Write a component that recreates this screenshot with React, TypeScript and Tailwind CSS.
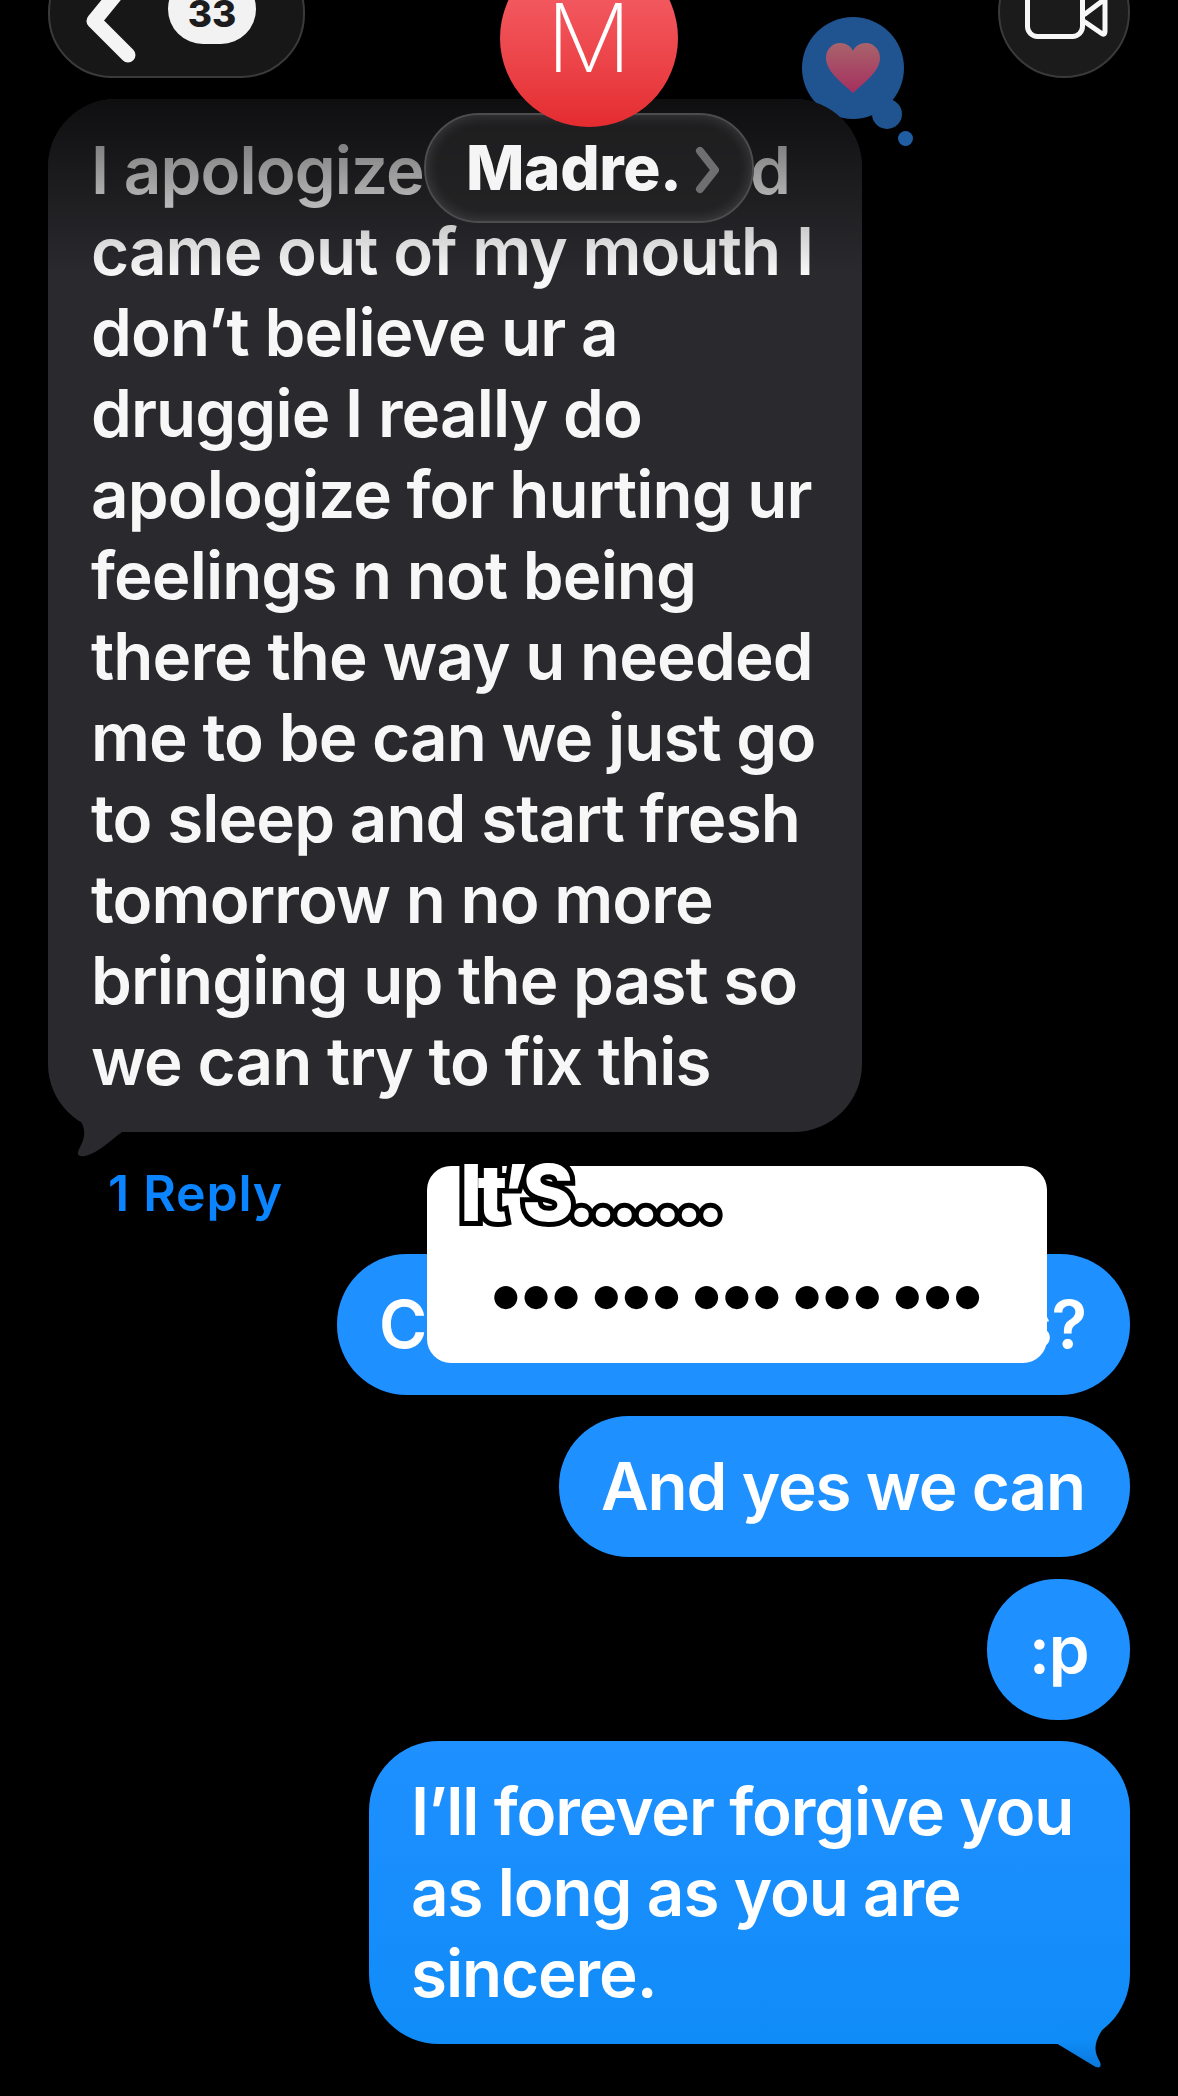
const grayLines = [
  "came out of my mouth I",
  "don’t believe ur a",
  "druggie I really do",
  "apologize for hurting ur",
  "feelings n not being",
  "there the way u needed",
  "me to be can we just go",
  "to sleep and start fresh",
  "tomorrow n no more",
  "bringing up the past so",
  "we can try to fix this",
];

const blueLines = ["I’ll forever forgive you", "as long as you are", "sincere."];

function Header() {
  return (
    <div className="relative flex h-[99px] items-end justify-between px-12 pb-[21px]">
      <div className="relative h-[130px] w-[257px] shrink-0 rounded-[64px] border-2 border-[#3a3a3a] bg-[#171717]">
        <svg className="absolute bottom-0 left-[28px] h-[90px] w-[60px]" viewBox="0 0 60 90" fill="none">
          <path d="M47 -3 L16 35 L50 69" stroke="#f4f4f4" strokeWidth="15" strokeLinecap="round" strokeLinejoin="round" />
        </svg>
        <div className="absolute bottom-[32px] left-[118px] flex h-[70px] w-[88px] items-end justify-center rounded-[40px] bg-[#f2f2f2] pb-[16px] text-[37px] leading-[28px] font-extrabold text-[#1c1c1e]">
          33
        </div>
      </div>
      <div className="relative h-[132px] w-[132px] shrink-0 rounded-full border-2 border-[#3a3a3a] bg-[#1b1b1b]">
        <svg className="absolute top-[52px] left-[25px] h-[50px] w-[90px]" viewBox="0 0 90 50" fill="none">
          <rect x="2.5" y="-20" width="55" height="56.5" rx="10" stroke="#f7f7f7" strokeWidth="5" />
          <path d="M60 22 L76 33 Q80 36 80 31 L80 0 M80 -1 L60 14" stroke="#f7f7f7" strokeWidth="5" strokeLinejoin="round" strokeLinecap="round" />
        </svg>
      </div>
    </div>
  );
}

function ThoughtBubble() {
  return (
    <>
      <div className="absolute top-[17px] left-[802px] flex h-[102px] w-[102px] items-center justify-center rounded-full bg-[#1f5490]">
        <svg className="h-[50px] w-[56px]" viewBox="0 0 56 50">
          <defs>
            <linearGradient id="heart" x1="0" y1="0" x2="0" y2="1">
              <stop offset="0" stopColor="#a9636c" />
              <stop offset="1" stopColor="#a52f5e" />
            </linearGradient>
          </defs>
          <path d="M28 50 C16 39 1 28 1 15 C1 6 8 0 15 0 C21 0 26 3 28 8 C30 3 35 0 41 0 C48 0 55 6 55 15 C55 28 40 39 28 50 Z" fill="url(#heart)" />
        </svg>
      </div>
      <div className="absolute top-[99px] left-[872px] h-[30px] w-[30px] rounded-full bg-[#1f5490]" />
      <div className="absolute top-[131px] left-[898px] h-[15px] w-[15px] rounded-full bg-[#1f5ea3]" />
    </>
  );
}

function GrayBubble() {
  return (
    <div className="relative z-10 ml-12 w-[814px]">
      <div className="relative rounded-[68px] bg-[#2a2a2e] px-[43px] pt-[31px] pb-[30px] text-[65.5px] leading-[81px] font-semibold tracking-[-0.9px] whitespace-nowrap text-[#f7f7f7]">
        <div className="flex w-[699px] justify-between">
          <span>I apologize</span>
          <span>d</span>
        </div>
        {grayLines.map((line) => (
          <div key={line}>{line}</div>
        ))}
        <div className="absolute inset-x-0 top-0 h-[175px] rounded-t-[68px] bg-gradient-to-b from-black/65 to-transparent" />
      </div>
      <svg className="absolute bottom-[-28px] left-[22px] h-[60px] w-[60px]" viewBox="70 1100 60 60">
        <path d="M72 1100 C78 1118 86 1126 84 1136 C83 1143 79 1148 78 1152 C77 1156 81 1157 85 1156 C100 1152 108 1142 122 1132 L110 1100 Z" fill="#2a2a2e" />
      </svg>
    </div>
  );
}

function MadrePill() {
  return (
    <div className="absolute top-[113px] left-[424px] z-20 flex h-[110px] w-[330px] items-center rounded-full border-2 border-[#4c4c4e] bg-[#232325]/70 pl-[40px] shadow-[inset_0_0_14px_rgba(255,255,255,0.16)] backdrop-blur-[4px]">
      <span className="text-[62px] leading-none font-extrabold tracking-[-0.4px] text-[#f5f5f5]">Madre.</span>
      <svg className="absolute top-[30px] right-[30px] h-[50px] w-[28px]" viewBox="0 0 28 50" fill="none">
        <path d="M6 6 L21 25 L6 44" stroke="#6f6f72" strokeWidth="8" strokeLinecap="round" strokeLinejoin="round" />
      </svg>
    </div>
  );
}

function BlueBubble({ children, className }: { children: React.ReactNode; className?: string }) {
  return (
    <div className={`rounded-[70px] bg-[#1e90ff] py-[30px] pr-[44px] pl-[42px] text-[65.5px] leading-[81px] font-semibold tracking-[-1.1px] whitespace-nowrap text-white ${className ?? ""}`}>
      {children}
    </div>
  );
}

export default function App() {
  return (
    <div className="relative h-[2096px] w-[1178px] overflow-hidden bg-black font-['Inter',sans-serif]">
      <Header />
      <ThoughtBubble />
      <GrayBubble />
      <MadrePill />

      <div className="absolute top-[-51px] left-[500px] z-30 flex h-[178px] w-[178px] items-start justify-center rounded-full bg-gradient-to-b from-[#f8656f] to-[#e42b30] pt-[54px] text-[95px] leading-[70px] font-extralight text-white">
        M
      </div>

      <div className="mt-[30px] ml-[108px] text-[50px] leading-[62px] font-semibold tracking-[0.8px] text-[#0a84ff]">1 Reply</div>

      <div className="mt-[30px] flex flex-col items-end pr-12">
        <BlueBubble className="flex w-[793px] justify-between">
          <span>C</span>
          <span>s?</span>
        </BlueBubble>
        <BlueBubble className="mt-[21px] w-[571px]">And yes we can</BlueBubble>
        <BlueBubble className="mt-[22px] w-[143px]">:p</BlueBubble>
        <div className="relative mt-[21px]">
          <BlueBubble className="w-[761px] bg-gradient-to-b from-[#1e90ff] to-[#0f8cf8]">
            {blueLines.map((line) => (
              <div key={line}>{line}</div>
            ))}
          </BlueBubble>
          <svg className="absolute right-[0px] bottom-[-26px] h-[60px] w-[80px]" viewBox="1050 2010 80 60">
            <defs>
              <linearGradient id="tail" gradientUnits="userSpaceOnUse" x1="0" y1="2040" x2="0" y2="2068">
                <stop offset="0" stopColor="#0f8cf8" />
                <stop offset="1" stopColor="#0b78d8" />
              </linearGradient>
            </defs>
            <path d="M1060 2044 L1060 2020 L1110 2020 C1096 2036 1091 2048 1100 2062 C1102 2067 1099 2069 1094 2066 L1056 2043 Z" fill="url(#tail)" />
          </svg>
        </div>
      </div>

      <div className="absolute top-[1166px] left-[427px] z-40 h-[197px] w-[620px] rounded-[24px] bg-white">
        <div className="absolute top-[-15px] left-[33px] text-[78px] leading-[84px] font-extrabold tracking-[-6px] whitespace-nowrap text-white [-webkit-text-stroke:10px_black] [paint-order:stroke_fill]">
          It’S.......
        </div>
        <div className="absolute top-[102px] left-[58px] flex gap-[10px] text-[74px] leading-[48px] tracking-[-11.5px] whitespace-nowrap text-black">
          <span>•••</span>
          <span>•••</span>
          <span>•••</span>
          <span>•••</span>
          <span>•••</span>
        </div>
      </div>
    </div>
  );
}
